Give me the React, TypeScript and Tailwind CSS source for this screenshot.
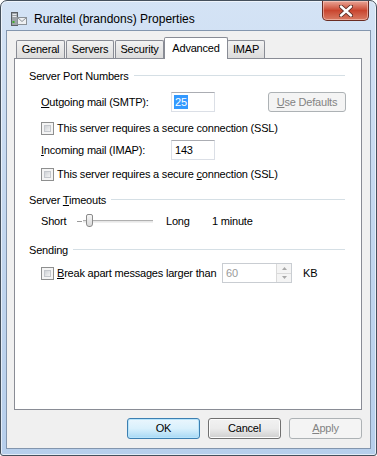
import React from 'react'

const font = { fontFamily: '"Liberation Sans", Arial, sans-serif' }

function U({ children }: { children: React.ReactNode }) {
  return <span className="underline underline-offset-[1px] decoration-1">{children}</span>
}

function Checkbox() {
  return (
    <div className="w-[13px] h-[13px] border border-[#8e8f8f] bg-[#f4f4f4] p-[2px] shrink-0">
      <div className="w-full h-full border border-[#c4c7cc] bg-gradient-to-br from-[#cfd2d6] to-[#f3f3f3]" />
    </div>
  )
}

function GroupHeader({ children, className }: { children: React.ReactNode; className?: string }) {
  return (
    <div className={`flex items-center h-[14px] pl-[14px] pr-[16px] ${className ?? ''}`}>
      <span className="whitespace-nowrap">{children}</span>
      <div className="flex-1 ml-[5px] h-[2px] border-t border-[#d5dfe5] border-b border-b-white" />
    </div>
  )
}

function TextBox({ children, className }: { children: React.ReactNode; className?: string }) {
  return (
    <div className={`h-[20px] border border-[#dbdfe6] border-t-[#abadb3] bg-white flex items-center px-[2px] ${className ?? ''}`}>
      {children}
    </div>
  )
}

function Tab({ label, w, active }: { label: string; w: number; active?: boolean }) {
  if (active) {
    return (
      <div style={{ width: w }}
        className="h-[22px] -mb-px border border-b-0 border-[#898c95] bg-white rounded-t-[2px] flex items-start justify-center pt-[2px] relative z-10 -mx-[1px]">
        {label}
      </div>
    )
  }
  return (
    <div style={{ width: w }}
      className="h-[18px] border border-b-0 border-[#898c95] bg-gradient-to-b from-[#f2f2f2] to-[#dcdcdc] rounded-t-[2px] flex items-center justify-center mr-[1px]">
      {label}
    </div>
  )
}

function WinButton({ children, variant }: { children: React.ReactNode; variant: 'default' | 'normal' | 'disabled' }) {
  const cls =
    variant === 'default'
      ? 'border-[#3c7fb1] bg-gradient-to-b from-[#eaf6fd] via-[#d9f0fc] to-[#a7d9f5] text-black shadow-[inset_0_0_0_1px_#b8e4fb]'
      : variant === 'normal'
      ? 'border-[#707070] bg-gradient-to-b from-[#f2f2f2] via-[#ebebeb] to-[#cfcfcf] text-black shadow-[inset_0_0_0_1px_#fcfcfc]'
      : 'border-[#adb2b5] bg-[#f4f4f4] text-[#838383]'
  return (
    <div className={`w-[73px] h-[21px] rounded-[3px] border flex items-center justify-center ${cls}`}>
      {children}
    </div>
  )
}

function AppIcon() {
  return (
    <svg width="16" height="14" viewBox="0 0 16 14">
      <rect x="0.5" y="0.5" width="6" height="13" fill="#9ea3a8" stroke="#5b6066" />
      <rect x="1.5" y="2" width="4" height="1" fill="#e8eaec" />
      <rect x="1.5" y="4" width="4" height="1" fill="#e8eaec" />
      <rect x="1.5" y="9" width="2" height="2" fill="#3fae2a" />
      <rect x="6.5" y="5.5" width="9" height="7" fill="#eef0f2" stroke="#8a9096" />
      <path d="M6.5 5.5 L11 9.5 L15.5 5.5" fill="none" stroke="#8a9096" />
    </svg>
  )
}

function CloseButton() {
  return (
    <div className="w-[47px] h-[20px] rounded-b-[5px] border border-t-0 border-[#6a2c23] bg-gradient-to-b from-[#e8a597] via-[#c9452f] to-[#d87a63] flex items-center justify-center shadow-[inset_0_0_0_1px_rgba(255,220,210,0.5)]">
      <svg width="14" height="12" viewBox="0 0 14 12">
        <path d="M2 1.5 L12 10.5 M12 1.5 L2 10.5" stroke="#5a2a22" strokeWidth="4.2" strokeLinecap="round" />
        <path d="M2 1.5 L12 10.5 M12 1.5 L2 10.5" stroke="#ffffff" strokeWidth="2.4" strokeLinecap="round" />
      </svg>
    </div>
  )
}

export default function App() {
  return (
    <div className="w-[377px] h-[456px] bg-white text-[11px] tracking-[-0.2px] text-black" style={font}>
      <div className="w-full h-full rounded-t-[7px] rounded-b-[3px] border border-[#45505c] bg-gradient-to-b from-[#d4e3f5] via-[#c3d7ef] to-[#b7cfec] flex flex-col px-[5px] pb-[6px] shadow-[inset_0_0_0_1px_rgba(255,255,255,0.6)]">
        <div className="h-[29px] flex items-start shrink-0">
          <div className="flex items-center gap-[7px] pl-[5px] pt-[9px]">
            <AppIcon />
            <span className="text-[12px] tracking-normal">Ruraltel (brandons) Properties</span>
          </div>
          <div className="ml-auto mr-[2px]">
            <CloseButton />
          </div>
        </div>

        <div className="flex-1 min-h-0 border border-[#8396ae] bg-[#f0f0f0] flex flex-col pl-[7px] pr-[8px] pt-[6px] pb-[9px]">
          <div className="flex items-end h-[21px] pl-[2px] shrink-0">
            <Tab label="General" w={49} />
            <Tab label="Servers" w={48} />
            <Tab label="Security" w={49} />
            <Tab label="Advanced" w={64} active />
            <Tab label="IMAP" w={38} />
          </div>

          <div className="flex-1 min-h-0 border border-[#898c95] bg-white flex flex-col">
            <GroupHeader className="mt-[10px]">Server Port Numbers</GroupHeader>

            <div className="flex items-center h-[20px] mt-[9px] pl-[26px]">
              <span className="w-[130px]"><U>O</U>utgoing mail (SMTP):</span>
              <TextBox className="w-[44px]">
                <span className="bg-[#3399ff] text-white px-[1px] leading-[14px]">25</span>
              </TextBox>
              <div className="ml-[53px] w-[78px] h-[20px] rounded-[3px] border border-[#adb2b5] bg-[#f4f4f4] text-[#838383] flex items-center justify-center">
                <span><U>U</U>se Defaults</span>
              </div>
            </div>

            <div className="flex items-center gap-[3px] h-[14px] mt-[9px] pl-[26px]">
              <Checkbox />
              <span>This server requires a secure connection (SSL)</span>
            </div>

            <div className="flex items-center h-[20px] mt-[5px] pl-[26px]">
              <span className="w-[130px]"><U>I</U>ncoming mail (IMAP):</span>
              <TextBox className="w-[44px]">
                <span className="px-[1px]">143</span>
              </TextBox>
            </div>

            <div className="flex items-center gap-[3px] h-[14px] mt-[7px] pl-[26px]">
              <Checkbox />
              <span>This server requires a secure <U>c</U>onnection (SSL)</span>
            </div>

            <GroupHeader className="mt-[12px]">Server <U>T</U>imeouts</GroupHeader>

            <div className="flex items-center h-[20px] mt-[4px] pl-[26px]">
              <span className="w-[36px]">Short</span>
              <div className="relative w-[76px] h-[14px] flex items-center">
                <div className="w-[5px] h-px bg-[#9a9a9a] mr-[1px]" />
                <div className="flex-1 h-[3px] border-t border-[#b0b0b0] border-b border-b-[#f0f0f0] bg-[#e7e7e7]" />
                <div className="absolute left-[9px] top-0 w-[7px] h-[13px] rounded-[2px] rounded-b-[3px] border border-[#8a8a8a] bg-gradient-to-b from-[#f6f6f6] to-[#d8d8d8]" />
              </div>
              <span className="ml-[13px] w-[46px]">Long</span>
              <span>1 minute</span>
            </div>

            <GroupHeader className="mt-[12px]">Sending</GroupHeader>

            <div className="flex items-center h-[20px] mt-[6px] pl-[26px]">
              <Checkbox />
              <span className="ml-[3px] w-[165px]"><U>B</U>reak apart messages larger than</span>
              <div className="w-[70px] h-[20px] border border-[#c9cdd2] bg-white flex items-stretch">
                <span className="flex-1 text-[#9a9a9a] pl-[3px] flex items-center">60</span>
                <div className="w-[15px] flex flex-col border-l border-[#dadada] bg-[#f4f4f4]">
                  <div className="flex-1 flex items-center justify-center border-b border-[#dadada]">
                    <svg width="5" height="3" viewBox="0 0 5 3"><path d="M0 3 L2.5 0 L5 3 Z" fill="#a8a8a8" /></svg>
                  </div>
                  <div className="flex-1 flex items-center justify-center">
                    <svg width="5" height="3" viewBox="0 0 5 3"><path d="M0 0 L2.5 3 L5 0 Z" fill="#a8a8a8" /></svg>
                  </div>
                </div>
              </div>
              <span className="ml-[11px]">KB</span>
            </div>
          </div>

          <div className="flex justify-end gap-[8px] mt-[8px] shrink-0">
            <WinButton variant="default">OK</WinButton>
            <WinButton variant="normal">Cancel</WinButton>
            <WinButton variant="disabled"><span><U>A</U>pply</span></WinButton>
          </div>
        </div>
      </div>
    </div>
  )
}
